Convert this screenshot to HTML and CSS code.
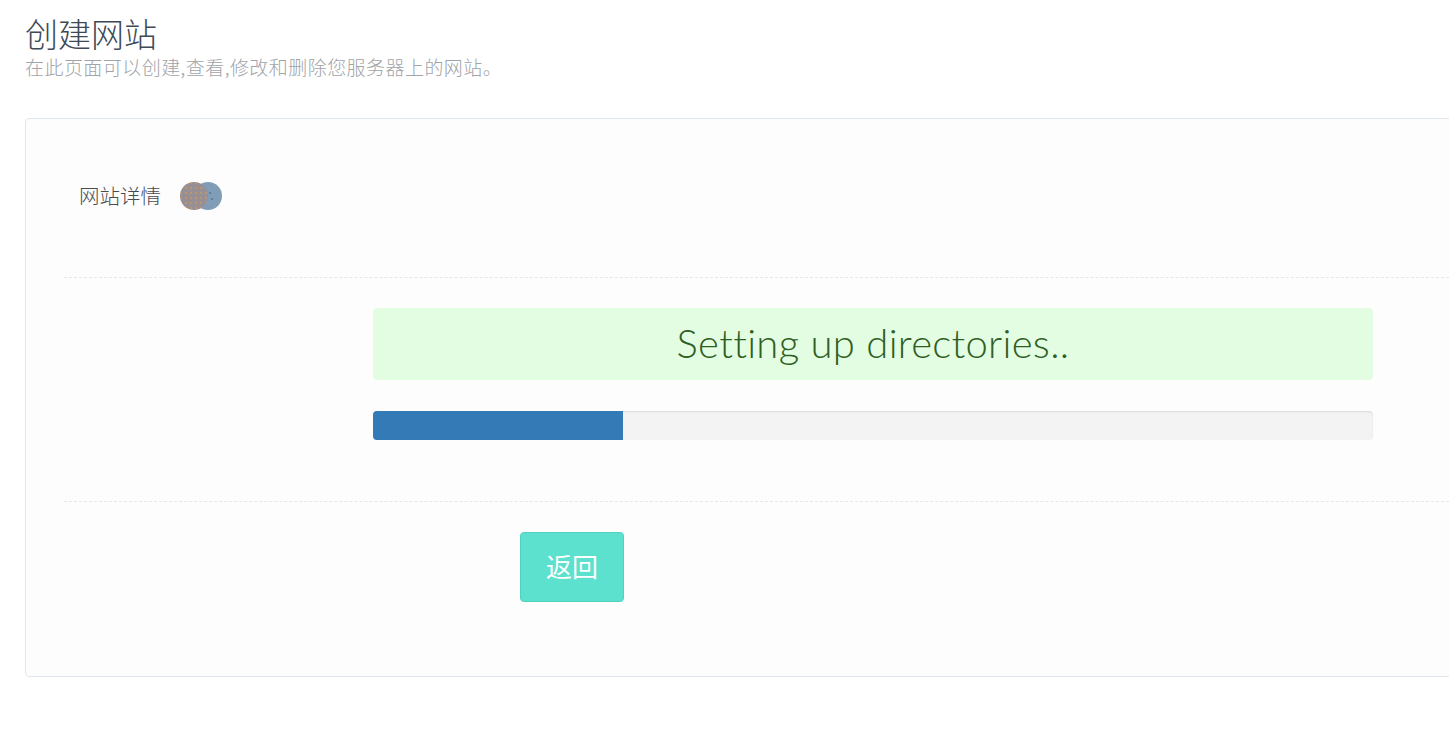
FILE: index.html
```html
<!DOCTYPE html>
<html lang="zh">
<head>
<meta charset="utf-8">
<title>创建网站</title>
<link rel="stylesheet" href="styles.css">
</head>
<body>
<div class="page">
  <header class="page-head">
    <h1 class="title">创建网站</h1>
    <p class="subtitle">在此页面可以创建,查看,修改和删除您服务器上的网站。</p>
  </header>
  <section class="card">
    <div class="card-head">
      <span class="card-title">网站详情</span>
      <svg class="loader" width="44" height="30" viewBox="0 0 44 30">
        <defs>
          <pattern id="dots" width="5" height="5" patternUnits="userSpaceOnUse">
            <circle cx="2" cy="2" r="0.8" fill="#e0a040"/>
          </pattern>
        </defs>
        <circle cx="29" cy="15" r="14" fill="#7f9db7"/>
        <circle cx="31" cy="12" r="0.8" fill="#3e5a74"/>
        <circle cx="33" cy="18" r="0.8" fill="#3e5a74"/>
        <circle cx="15" cy="15" r="14" fill="#988f95"/>
        <circle cx="15" cy="15" r="14" fill="url(#dots)"/>
      </svg>
    </div>
    <div class="divider"></div>
    <div class="status">
      <div class="alert">Setting up directories..</div>
      <div class="progress"><div class="progress-bar" style="width:25%"></div></div>
    </div>
    <div class="divider"></div>
    <div class="actions">
      <button class="btn-back">返回</button>
    </div>
  </section>
</div>
</body>
</html>
```
FILE: styles.css
```css
html, body {
  margin: 0;
  padding: 0;
  background: #ffffff;
  overflow: hidden;
}
body {
  font-family: "Open Sans", "Noto Sans CJK SC", sans-serif;
  color: #555;
}
.page {
  padding: 13px 0 0 25px;
}
.page-head {
  margin: 0;
}
.title {
  margin: 0;
  font-family: "Noto Sans CJK SC", sans-serif;
  font-weight: 300;
  font-size: 33px;
  line-height: 40px;
  color: #3e4a55;
}
.subtitle {
  margin: 0;
  font-family: "Noto Sans CJK SC", sans-serif;
  font-weight: 300;
  font-size: 19px;
  line-height: 28px;
  letter-spacing: 0.45px;
  color: #a0a4a8;
}
.card {
  margin-top: 37px;
  width: 1440px;
  height: 559px;
  box-sizing: border-box;
  border: 1px solid #dfe6ee;
  border-radius: 4px;
  background: #fdfdfd;
  padding-left: 38px;
}
.card-head {
  display: flex;
  align-items: center;
  height: 158px;
  padding-left: 15px;
  padding-bottom: 6px;
  box-sizing: border-box;
}
.card-title {
  font-family: "Noto Sans CJK SC", sans-serif;
  font-weight: 300;
  font-size: 20.5px;
  color: #4a4a50;
  margin-right: 18px;
}
.loader {
  display: block;
  margin-top: 2px;
}
.divider {
  border-top: 1px dashed #e3e8ee;
}
.status {
  padding: 30px 0 0 309px;
  height: 223px;
  box-sizing: border-box;
}
.alert {
  width: 1000px;
  height: 72px;
  box-sizing: border-box;
  background: #e3fde3;
  border-radius: 4px;
  display: flex;
  align-items: center;
  justify-content: center;
  font-family: "Lato", sans-serif;
  font-weight: 300;
  font-size: 40px;
  letter-spacing: 0.3px;
  color: #2f5e22;
  padding-bottom: 2px;
}
.progress {
  margin-top: 31px;
  width: 1000px;
  height: 29px;
  background: #f3f3f3;
  border-radius: 4px;
  box-shadow: inset 0 1px 2px rgba(0,0,0,0.1);
  overflow: hidden;
}
.progress-bar {
  height: 100%;
  background: #337ab7;
}
.actions {
  padding: 30px 0 0 456px;
}
.btn-back {
  width: 104px;
  height: 70px;
  background: #5be1ce;
  border: 1px solid #4fd2bf;
  border-radius: 4px;
  color: #ffffff;
  font-family: "Noto Sans CJK SC", sans-serif;
  font-size: 26px;
  font-weight: 400;
  padding: 0 0 3px 0;
  cursor: pointer;
}
```
